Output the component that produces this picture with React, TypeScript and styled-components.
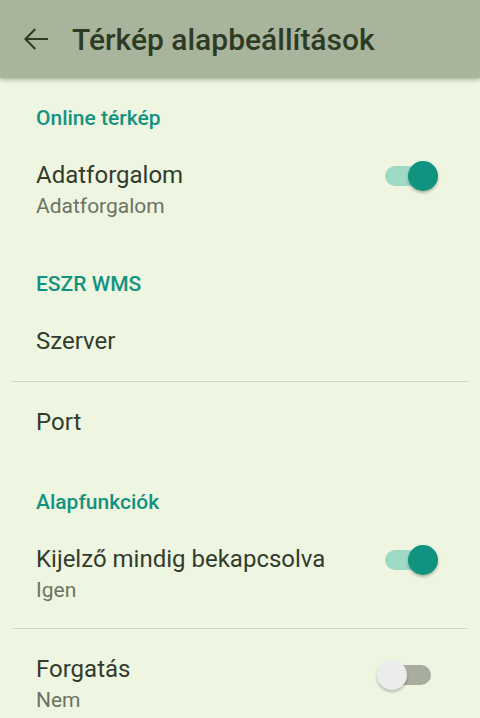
import React from 'react';
import styled, { createGlobalStyle } from 'styled-components';

const GlobalStyle = createGlobalStyle`
  html, body {
    margin: 0;
    padding: 0;
    background: #eef6e1;
  }
  body {
    font-family: Roboto, "Noto Sans", sans-serif;
  }
`;

const Screen = styled.div`
  width: 480px;
  height: 718px;
  overflow: hidden;
  background: #eef6e1;
`;

const AppBar = styled.header`
  height: 78px;
  display: flex;
  align-items: center;
  background: #a8b59c;
  box-shadow: 0 2px 4px rgba(60, 70, 50, 0.35);
  position: relative;
  z-index: 1;
`;

const BackButton = styled.button`
  width: 72px;
  height: 78px;
  display: flex;
  align-items: center;
  justify-content: center;
  padding: 0;
  border: none;
  background: transparent;
  color: #2e3b24;
  cursor: pointer;
`;

const Title = styled.h1`
  margin: 0;
  font-size: 30px;
  font-weight: 500;
  color: #2e3b24;
`;

const List = styled.div`
  display: flex;
  flex-direction: column;
`;

const Category = styled.div`
  height: 57px;
  box-sizing: border-box;
  padding: 28px 36px 0;
  font-size: 21px;
  line-height: 24px;
  font-weight: 500;
  color: #13937f;
`;

const Row = styled.div<{ twoLine?: boolean }>`
  height: ${({ twoLine }) => (twoLine ? '109px' : '80px')};
  box-sizing: border-box;
  padding: ${({ twoLine }) => (twoLine ? '25px 49px 0 36px' : '0 49px 0 36px')};
  display: flex;
  align-items: ${({ twoLine }) => (twoLine ? 'flex-start' : 'center')};
  justify-content: space-between;
`;

const Texts = styled.div`
  display: flex;
  flex-direction: column;
`;

const RowTitle = styled.div`
  font-size: 24px;
  line-height: 30px;
  color: #323c2c;
`;

const Summary = styled.div`
  font-size: 21px;
  line-height: 32px;
  color: #6b7365;
`;

const Divider = styled.hr`
  margin: 0 12px;
  border: none;
  border-top: 1px solid #cfd6c4;
  height: 0;
`;

const SwitchTrack = styled.div<{ on: boolean }>`
  position: relative;
  width: 46px;
  height: 20px;
  border-radius: 10px;
  margin-top: ${({ on }) => (on ? '6px' : '11px')};
  background: ${({ on }) => (on ? '#a0d9c5' : '#a9ad9f')};
  flex-shrink: 0;
`;

const SwitchThumb = styled.div<{ on: boolean }>`
  position: absolute;
  top: -5px;
  left: ${({ on }) => (on ? '23px' : '-8px')};
  width: 30px;
  height: 30px;
  border-radius: 50%;
  background: ${({ on }) => (on ? '#10937f' : '#ececec')};
  box-shadow: 0 2px 3px rgba(0, 0, 0, 0.25);
`;

function Switch({ on }: { on: boolean }) {
  return (
    <SwitchTrack on={on}>
      <SwitchThumb on={on} />
    </SwitchTrack>
  );
}

export default function App() {
  return (
    <Screen>
      <GlobalStyle />
      <AppBar>
        <BackButton aria-label="Vissza">
          <svg width="36" height="36" viewBox="0 0 24 24" fill="currentColor">
            <path d="M20 11.3H6.6l5.4-5.4-1-1L4 12l7 7.1 1-1-5.4-5.4H20z" />
          </svg>
        </BackButton>
        <Title>Térkép alapbeállítások</Title>
      </AppBar>
      <List>
        <Category>Online térkép</Category>
        <Row twoLine>
          <Texts>
            <RowTitle>Adatforgalom</RowTitle>
            <Summary>Adatforgalom</Summary>
          </Texts>
          <Switch on />
        </Row>

        <Category>ESZR WMS</Category>
        <Row>
          <RowTitle>Szerver</RowTitle>
        </Row>
        <Divider />
        <Row>
          <RowTitle>Port</RowTitle>
        </Row>

        <Category>Alapfunkciók</Category>
        <Row twoLine>
          <Texts>
            <RowTitle>Kijelző mindig bekapcsolva</RowTitle>
            <Summary>Igen</Summary>
          </Texts>
          <Switch on />
        </Row>
        <Divider />
        <Row twoLine>
          <Texts>
            <RowTitle>Forgatás</RowTitle>
            <Summary>Nem</Summary>
          </Texts>
          <Switch on={false} />
        </Row>
      </List>
    </Screen>
  );
}
